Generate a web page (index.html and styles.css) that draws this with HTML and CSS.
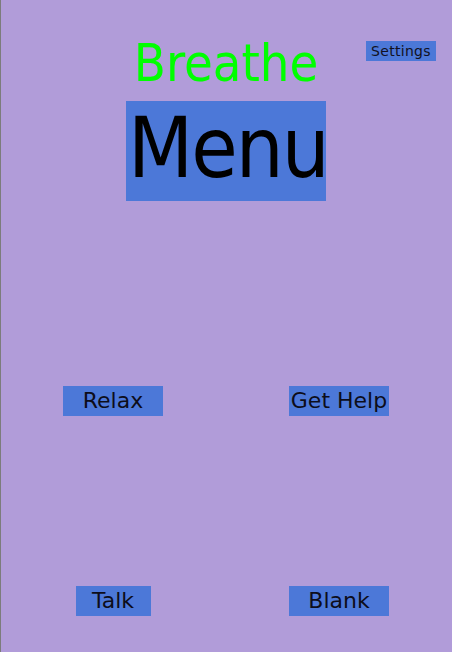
FILE: index.html
```html
<!DOCTYPE html>
<html>
<head>
<meta charset="utf-8">
<link rel="stylesheet" href="styles.css">
</head>
<body>
<div class="screen">
  <header class="top">
    <div class="spacer"></div>
    <h1 class="title">Breathe</h1>
    <div class="settings-wrap"><button class="settings">Settings</button></div>
  </header>
  <div class="menu-wrap"><div class="menu">Menu</div></div>
  <div class="grid">
    <div class="cell"><button class="btn w100">Relax</button></div>
    <div class="cell"><button class="btn w100">Get Help</button></div>
    <div class="cell"><button class="btn w75">Talk</button></div>
    <div class="cell"><button class="btn w100">Blank</button></div>
  </div>
</div>
</body>
</html>
```
FILE: styles.css
```css
html, body {
  margin: 0;
  padding: 0;
  background: #b19cd9;
}
.screen {
  width: 452px;
  height: 652px;
  box-sizing: border-box;
  border-left: 1px solid #7c7c7c;
  background: #b19cd9;
  font-family: "DejaVu Sans", sans-serif;
  overflow: hidden;
}
.top {
  display: grid;
  grid-template-columns: 1fr auto 1fr;
  padding-top: 37px;
  margin-left: -1px;
}
.title {
  margin: 0;
  font-weight: normal;
  font-size: 52px;
  line-height: 53px;
  color: #00ff00;
  font-stretch: condensed;
  letter-spacing: 0px;
}
.settings-wrap {
  display: flex;
  justify-content: flex-end;
  align-items: flex-start;
  padding-top: 4px;
  padding-right: 16px;
}
.settings {
  width: 70px;
  height: 20px;
  padding: 0;
  border: none;
  background: #4c78d8;
  color: #111122;
  font-family: "DejaVu Sans", sans-serif;
  font-size: 14px;
  letter-spacing: 0.3px;
  line-height: 20px;
}
.menu-wrap {
  display: flex;
  justify-content: center;
  margin-top: 11px;
  margin-left: -1px;
}
.menu {
  width: 200px;
  height: 100px;
  background: #4c78d8;
  color: #000;
  font-size: 84px;
  font-stretch: condensed;
  line-height: 94px;
  text-align: center;
  letter-spacing: -2px;
  text-indent: 2px;
  white-space: nowrap;
}
.grid {
  display: grid;
  grid-template-columns: 226px 226px;
  row-gap: 170px;
  margin-top: 185px;
  margin-left: -1px;
}
.cell {
  display: flex;
  justify-content: center;
}
.btn {
  height: 30px;
  padding: 0;
  border: none;
  background: #4c78d8;
  color: #0d0d1a;
  font-family: "DejaVu Sans", sans-serif;
  font-size: 22px;
  line-height: 30px;
  white-space: nowrap;
}
.w100 { width: 100px; }
.w75 { width: 75px; }
```
